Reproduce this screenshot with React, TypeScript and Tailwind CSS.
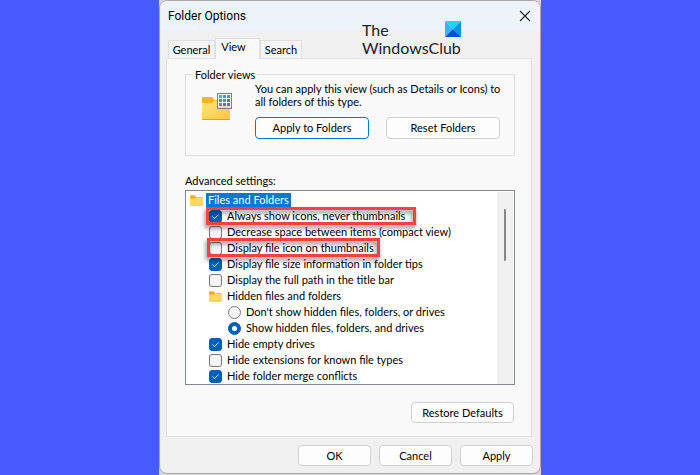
import { useState } from 'react';
import { clsx } from 'clsx';

type Setting = {
  label: string;
  kind: 'check' | 'radio' | 'group';
  on?: boolean;
  mark?: string;
};

const SETTINGS: Setting[] = [
  {
    label: 'Always show icons, never thumbnails',
    kind: 'check',
    on: true,
    mark: '-left-[3px] -top-px w-[210px] h-[18px]',
  },
  { label: 'Decrease space between items (compact view)', kind: 'check' },
  {
    label: 'Display file icon on thumbnails',
    kind: 'check',
    mark: '-left-[2px] -top-[2px] w-[173px] h-[19px]',
  },
  { label: 'Display file size information in folder tips', kind: 'check', on: true },
  { label: 'Display the full path in the title bar', kind: 'check' },
  { label: 'Hidden files and folders', kind: 'group' },
  { label: "Don't show hidden files, folders, or drives", kind: 'radio' },
  { label: 'Show hidden files, folders, and drives', kind: 'radio', on: true },
  { label: 'Hide empty drives', kind: 'check', on: true },
  { label: 'Hide extensions for known file types', kind: 'check' },
  { label: 'Hide folder merge conflicts', kind: 'check', on: true },
];

function FolderIcon() {
  return (
    <svg width="13" height="11" viewBox="0 0 13 11" className="shrink-0" aria-hidden="true">
      <path d="M0 1.2Q0 .3 1 .3h3.6L6.2 2H12q1 0 1 1v3H0z" fill="#f0ae1d" />
      <path d="M0 3.6h4.8L6.3 2.4H12q1 0 1 1v6q0 1-1 1H1q-1 0-1-1z" fill="#ffd764" />
      <path d="M.4 10.2h12.2" stroke="#e6b23c" strokeWidth=".6" />
    </svg>
  );
}

function FolderViewIcon() {
  const cols = ['#35b8dc', '#4a8fd0', '#6a62bd'];
  return (
    <svg width="30" height="28" viewBox="0 0 30 28" className="shrink-0" aria-hidden="true">
      <defs>
        <linearGradient id="folder" x1="0" y1="0" x2="1" y2="1">
          <stop offset="0" stopColor="#ffe28a" />
          <stop offset="1" stopColor="#fcc735" />
        </linearGradient>
      </defs>
      <path d="M0 5q0-1 1-1h9l3 3h15v6H0z" fill="#f5b41c" />
      <path d="M0 10h9.500l3.500-2.500h15V26q0 1-1 1H1q-1 0-1-1z" fill="url(#folder)" />
      <path d="M0 26.500h28" stroke="#d9a02b" />
      <rect x="15.500" y=".5" width="14" height="15" fill="#fff" stroke="#7d7d7d" />
      {[2, 6, 10].map((y, row) =>
        [17, 21, 25].map((x, col) => (
          <rect key={`${x}-${y}`} x={x} y={y} width="3" height="3" fill={cols[Math.min(2, Math.round((row + col) / 2))]} />
        )),
      )}
      <path d="M17 14h11" stroke="#b8b8c4" strokeWidth="1" />
    </svg>
  );
}

function PushButton({ children, className }: { children: string; className: string }) {
  return (
    <button
      type="button"
      className={clsx('rounded border bg-[#fdfdfd] text-center leading-[14px]', className)}
    >
      {children}
    </button>
  );
}

function Row({ item, checked, onToggle }: { item: Setting; checked: boolean; onToggle: () => void }) {
  if (item.kind === 'group') {
    return (
      <li className="flex h-4 items-center gap-[5px] pl-[22px]">
        <FolderIcon />
        {item.label}
      </li>
    );
  }
  const radio = item.kind === 'radio';
  return (
    <li className={clsx('flex h-4 items-center', radio ? 'pl-[41px]' : 'pl-[22px]')}>
      <label className="relative flex h-4 items-center gap-[5px]">
        <span className="grid shrink-0 place-items-center">
          <input
            type={radio ? 'radio' : 'checkbox'}
            name={radio ? 'hidden-files' : undefined}
            checked={checked}
            onChange={onToggle}
            className={clsx(
              'col-start-1 row-start-1 size-[13px] appearance-none border',
              radio ? 'rounded-full' : 'rounded-[3px]',
              checked ? 'border-[#005fb8] bg-[#005fb8]' : 'border-[#757575] bg-[#f5f5f5]',
            )}
          />
          {checked && radio && (
            <span className="pointer-events-none col-start-1 row-start-1 size-[5px] rounded-full bg-white" />
          )}
          {checked && !radio && (
            <svg width="13" height="13" viewBox="0 0 13 13" className="pointer-events-none col-start-1 row-start-1" aria-hidden="true">
              <path d="M3.500 6.500l2 2.200 4-4.200" fill="none" stroke="#d8e8f6" />
            </svg>
          )}
        </span>
        <span className="whitespace-nowrap">{item.label}</span>
        {item.mark && (
          <span
            className={clsx(
              'pointer-events-none absolute z-10 border-3 border-[#fb4044] drop-shadow-[-1px_3px_2px_rgba(0,0,0,0.5)]',
              item.mark,
            )}
          />
        )}
      </label>
    </li>
  );
}

export default function App() {
  const [state, setState] = useState(() => SETTINGS.map((s) => Boolean(s.on)));

  const toggle = (index: number) => {
    setState((prev) =>
      prev.map((value, i) => {
        if (SETTINGS[index].kind === 'radio') {
          return SETTINGS[i].kind === 'radio' ? i === index : value;
        }
        return i === index ? !value : value;
      }),
    );
  };

  return (
    <div className="flex min-h-screen justify-center bg-[#465cff] font-['Lato','Liberation_Sans',sans-serif] text-[11px] leading-[13px] text-black">
      <div className="w-full max-w-[382px] bg-[#d8d8d8] pb-px">
        <main className="relative flex min-h-full flex-col overflow-hidden rounded-lg border border-[#a9a9a9] bg-[#f0f0f0]">
          <header className="flex h-[30px] items-center justify-between bg-[#eef3fa] pr-[9px] pl-2">
            <h1 className="font-['Roboto',sans-serif] text-[12px] leading-4">Folder Options</h1>
            <button type="button" aria-label="Close">
              <svg width="12" height="12" viewBox="0 0 12 12" aria-hidden="true">
                <path d="M1 1l10 10M11 1L1 11" stroke="#222" strokeWidth="1.100" />
              </svg>
            </button>
          </header>

          {/* brand */}
          <div className="absolute top-5 left-[202px] text-[16px] leading-[18px] text-[#222]">
            <div className="flex justify-between">
              The
              <svg width="16" height="16" viewBox="0 0 16 16" aria-hidden="true">
                <path d="M0 0h16L8 8z" fill="#12d8fb" />
                <path d="M0 0l8 8-8 8z" fill="#35b4f8" />
                <path d="M16 0v16L8 8z" fill="#0796ee" />
                <path d="M0 16l8-8 8 8z" fill="#0750d8" />
              </svg>
            </div>
            <div>WindowsClub</div>
          </div>

          <div className="flex items-end px-2 pt-[7px] leading-[14px]" role="tablist">
            <button type="button" role="tab" aria-selected="false" className="h-[18px] w-[47px] border border-b-0 border-[#e0e0e0] bg-[#f4f4f4]">
              General
            </button>
            <button type="button" role="tab" aria-selected="true" className="relative z-10 -mb-px h-[21px] w-[45px] border border-b-0 border-[#e0e0e0] bg-[#f9f9f9] pr-2 pb-1">
              View
            </button>
            <button type="button" role="tab" aria-selected="false" className="h-[18px] w-[42px] border border-b-0 border-[#e0e0e0] bg-[#f4f4f4]">
              Search
            </button>
          </div>

          <section className="mr-2 ml-[6px] flex flex-col border border-[#e0e0e0] bg-[#f9f9f9] pt-[9px] pr-4 pb-[13px] pl-[18px]">
            <fieldset className="border border-[#dcdcdc] pr-[6px] pb-4 pl-[14px]">
              <legend className="-ml-[7px] px-[2px]">Folder views</legend>
              <div className="flex gap-[23px] pt-px pl-[2px]">
                <div className="pt-[11px]">
                  <FolderViewIcon />
                </div>
                <div className="grow">
                  <p className="whitespace-nowrap">
                    You can apply this view (such as Details or Icons) to
                    <br />
                    all folders of this type.
                  </p>
                  <div className="mt-[9px] flex gap-[17px]">
                    <PushButton className="h-[22px] w-[114px] border-[#0078d4]">Apply to Folders</PushButton>
                    <PushButton className="h-[22px] w-[114px] border-[#d0d0d0]">Reset Folders</PushButton>
                  </div>
                </div>
              </div>
            </fieldset>

            <h2 className="mt-[18px]">Advanced settings:</h2>
            <div className="mt-[3px] flex border border-[#828790] bg-white px-px pt-px">
              <ul className="grow leading-[14px]">
                <li className="flex h-4 items-center gap-[3px] pl-[3px]">
                  <FolderIcon />
                  <span className="h-[15px] bg-[#0078d7] px-[2px] text-white">Files and Folders</span>
                </li>
                {SETTINGS.map((item, i) => (
                  <Row key={item.label} item={item} checked={state[i]} onToggle={() => toggle(i)} />
                ))}
              </ul>
              <div className="flex w-4 justify-center bg-[#f0f0f0] pt-[17px]">
                <div className="h-[52px] w-[2px] rounded-full bg-[#858585]" />
              </div>
            </div>

            <PushButton className="mt-[17px] mr-px h-[21px] w-[103px] self-end border-[#d0d0d0]">Restore Defaults</PushButton>
          </section>

          <footer className="flex justify-end gap-2 pt-2 pr-[7px] pb-[7px]">
            <PushButton className="h-[21px] w-[73px] border-[#d0d0d0]">OK</PushButton>
            <PushButton className="h-[21px] w-[73px] border-[#d0d0d0]">Cancel</PushButton>
            <PushButton className="h-[21px] w-[73px] border-[#d0d0d0]">Apply</PushButton>
          </footer>
        </main>
      </div>
    </div>
  );
}
